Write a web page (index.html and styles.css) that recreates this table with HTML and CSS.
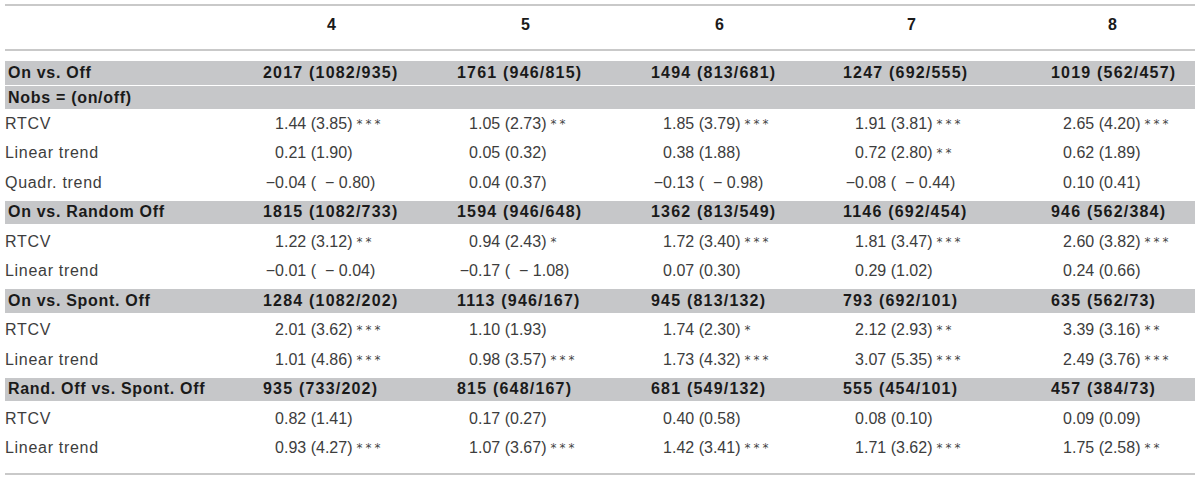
FILE: index.html
```html
<!DOCTYPE html>
<html>
<head>
<meta charset="utf-8">
<link rel="stylesheet" href="styles.css">
</head>
<body>
<div class="tbl">
  <div class="row head">
    <div></div><div class="h">4</div><div class="h">5</div><div class="h">6</div><div class="h">7</div><div class="h">8</div>
  </div>

  <div class="row sec s1">
    <div class="lab">On vs. Off</div>
    <div class="b">2017 (1082/935)</div><div class="b">1761 (946/815)</div><div class="b">1494 (813/681)</div><div class="b">1247 (692/555)</div><div class="b">1019 (562/457)</div>
  </div>
  <div class="row sec s2">
    <div class="lab">Nobs = (on/off)</div><div></div><div></div><div></div><div></div><div></div>
  </div>
  <div class="row r">
    <div class="lab">RTCV</div>
    <div class="v"><span class="i">1</span>.44 (3.85)<span class="st">***</span></div>
    <div class="v"><span class="i">1</span>.05 (2.73)<span class="st">**</span></div>
    <div class="v"><span class="i">1</span>.85 (3.79)<span class="st">***</span></div>
    <div class="v"><span class="i">1</span>.91 (3.81)<span class="st">***</span></div>
    <div class="v"><span class="i">2</span>.65 (4.20)<span class="st">***</span></div>
  </div>
  <div class="row r">
    <div class="lab">Linear trend</div>
    <div class="v"><span class="i">0</span>.21 (1.90)</div>
    <div class="v"><span class="i">0</span>.05 (0.32)</div>
    <div class="v"><span class="i">0</span>.38 (1.88)</div>
    <div class="v"><span class="i">0</span>.72 (2.80)<span class="st">**</span></div>
    <div class="v"><span class="i">0</span>.62 (1.89)</div>
  </div>
  <div class="row r">
    <div class="lab">Quadr. trend</div>
    <div class="v"><span class="i">−0</span>.04 (<span class="sp"></span>− 0.80)</div>
    <div class="v"><span class="i">0</span>.04 (0.37)</div>
    <div class="v"><span class="i">−0</span>.13 (<span class="sp"></span>− 0.98)</div>
    <div class="v"><span class="i">−0</span>.08 (<span class="sp"></span>− 0.44)</div>
    <div class="v"><span class="i">0</span>.10 (0.41)</div>
  </div>

  <div class="row sec">
    <div class="lab">On vs. Random Off</div>
    <div class="b">1815 (1082/733)</div><div class="b">1594 (946/648)</div><div class="b">1362 (813/549)</div><div class="b">1146 (692/454)</div><div class="b">946 (562/384)</div>
  </div>
  <div class="row r">
    <div class="lab">RTCV</div>
    <div class="v"><span class="i">1</span>.22 (3.12)<span class="st">**</span></div>
    <div class="v"><span class="i">0</span>.94 (2.43)<span class="st">*</span></div>
    <div class="v"><span class="i">1</span>.72 (3.40)<span class="st">***</span></div>
    <div class="v"><span class="i">1</span>.81 (3.47)<span class="st">***</span></div>
    <div class="v"><span class="i">2</span>.60 (3.82)<span class="st">***</span></div>
  </div>
  <div class="row r">
    <div class="lab">Linear trend</div>
    <div class="v"><span class="i">−0</span>.01 (<span class="sp"></span>− 0.04)</div>
    <div class="v"><span class="i">−0</span>.17 (<span class="sp"></span>− 1.08)</div>
    <div class="v"><span class="i">0</span>.07 (0.30)</div>
    <div class="v"><span class="i">0</span>.29 (1.02)</div>
    <div class="v"><span class="i">0</span>.24 (0.66)</div>
  </div>

  <div class="row sec">
    <div class="lab">On vs. Spont. Off</div>
    <div class="b">1284 (1082/202)</div><div class="b">1113 (946/167)</div><div class="b">945 (813/132)</div><div class="b">793 (692/101)</div><div class="b">635 (562/73)</div>
  </div>
  <div class="row r">
    <div class="lab">RTCV</div>
    <div class="v"><span class="i">2</span>.01 (3.62)<span class="st">***</span></div>
    <div class="v"><span class="i">1</span>.10 (1.93)</div>
    <div class="v"><span class="i">1</span>.74 (2.30)<span class="st">*</span></div>
    <div class="v"><span class="i">2</span>.12 (2.93)<span class="st">**</span></div>
    <div class="v"><span class="i">3</span>.39 (3.16)<span class="st">**</span></div>
  </div>
  <div class="row r">
    <div class="lab">Linear trend</div>
    <div class="v"><span class="i">1</span>.01 (4.86)<span class="st">***</span></div>
    <div class="v"><span class="i">0</span>.98 (3.57)<span class="st">***</span></div>
    <div class="v"><span class="i">1</span>.73 (4.32)<span class="st">***</span></div>
    <div class="v"><span class="i">3</span>.07 (5.35)<span class="st">***</span></div>
    <div class="v"><span class="i">2</span>.49 (3.76)<span class="st">***</span></div>
  </div>

  <div class="row sec">
    <div class="lab">Rand. Off vs. Spont. Off</div>
    <div class="b">935 (733/202)</div><div class="b">815 (648/167)</div><div class="b">681 (549/132)</div><div class="b">555 (454/101)</div><div class="b">457 (384/73)</div>
  </div>
  <div class="row r">
    <div class="lab">RTCV</div>
    <div class="v"><span class="i">0</span>.82 (1.41)</div>
    <div class="v"><span class="i">0</span>.17 (0.27)</div>
    <div class="v"><span class="i">0</span>.40 (0.58)</div>
    <div class="v"><span class="i">0</span>.08 (0.10)</div>
    <div class="v"><span class="i">0</span>.09 (0.09)</div>
  </div>
  <div class="row r">
    <div class="lab">Linear trend</div>
    <div class="v"><span class="i">0</span>.93 (4.27)<span class="st">***</span></div>
    <div class="v"><span class="i">1</span>.07 (3.67)<span class="st">***</span></div>
    <div class="v"><span class="i">1</span>.42 (3.41)<span class="st">***</span></div>
    <div class="v"><span class="i">1</span>.71 (3.62)<span class="st">***</span></div>
    <div class="v"><span class="i">1</span>.75 (2.58)<span class="st">**</span></div>
  </div>
</div>
</body>
</html>
```

FILE: styles.css
```css
html, body {
  margin: 0;
  padding: 0;
  background: #ffffff;
}

body {
  font-family: "Liberation Sans", Arial, sans-serif;
  font-size: 16px;
  color: #3d3d3d;
}

.tbl {
  margin: 4px 5px 0;
  border-top: 2px solid #c9c9c9;
  border-bottom: 2px solid #c9c9c9;
  padding-bottom: 10px;
}

.row {
  display: grid;
  grid-template-columns: 258px 194px 194px 192px 208px 144px;
  align-items: center;
  white-space: nowrap;
}

.head {
  height: 38px;
  padding-bottom: 5px;
  border-bottom: 2px solid #c9c9c9;
}

.h {
  font-weight: bold;
  color: #1a1a1a;
  padding-left: 64px;
}

.head .h:last-child {
  padding-left: 57px;
}

.r {
  height: 29.5px;
}

.sec {
  box-sizing: border-box;
  height: 29.5px;
  padding: 3px 0;
  background: #c6c7c9;
  background-clip: content-box;
}

.s1 {
  margin-top: 10px;
  height: 24px;
  padding: 0;
  margin-bottom: 1px;
}

.s2 {
  height: 23px;
  padding: 0;
}

.lab {
  letter-spacing: 0.7px;
}

.sec .lab {
  padding-left: 3px;
  font-weight: bold;
  color: #1a1a1a;
  letter-spacing: 0.7px;
}

.b {
  font-weight: bold;
  color: #1a1a1a;
  letter-spacing: 1.2px;
}

.i {
  display: inline-block;
  width: 21px;
  text-align: right;
}

.sp {
  display: inline-block;
  width: 9px;
}

.st {
  font-family: "DejaVu Sans", sans-serif;
  font-size: 12px;
  letter-spacing: 3px;
  margin-left: 4px;
  vertical-align: 1px;
  color: #444444;
}
```
